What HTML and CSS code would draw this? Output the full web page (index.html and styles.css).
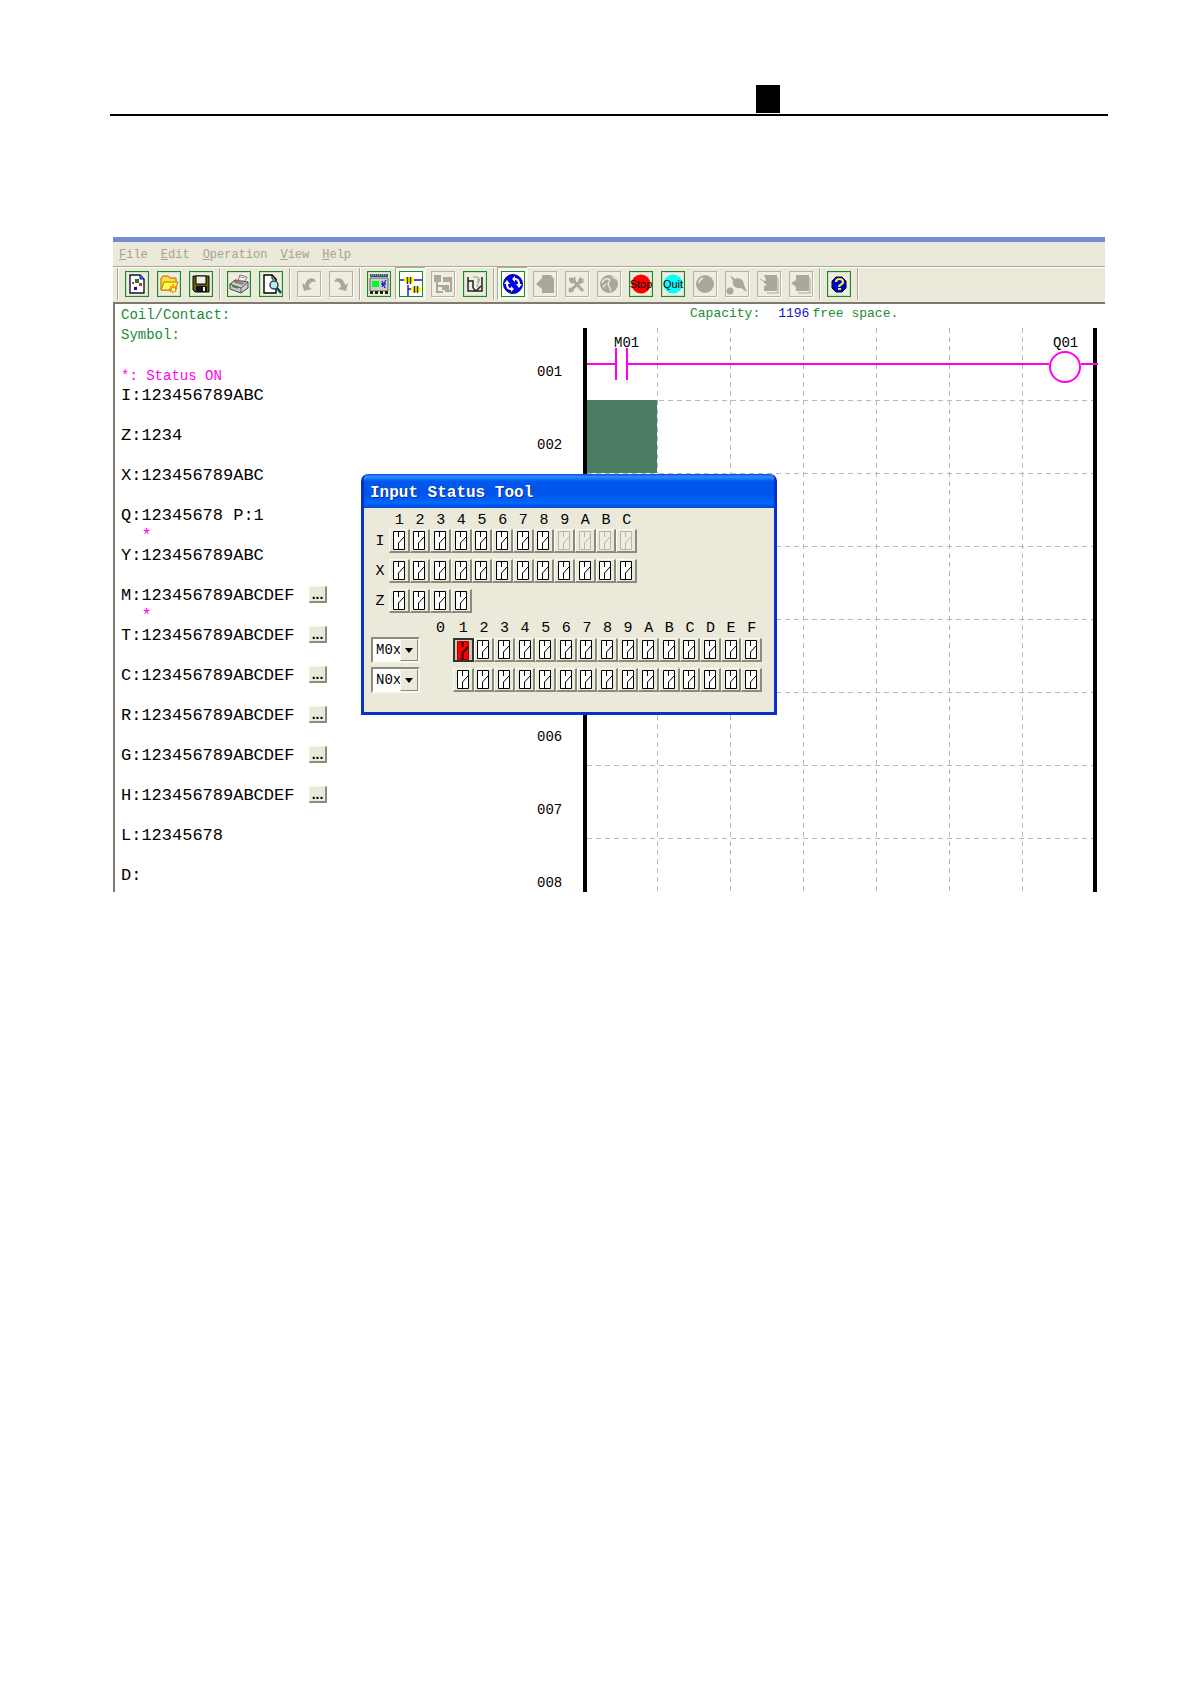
FILE: index.html
```html
<!DOCTYPE html>
<html lang="en">
<head>
<meta charset="utf-8">
<title>Input Status Tool</title>
<link rel="stylesheet" href="styles.css">
</head>
<body>
<header class="page-head"><div class="page-mark"></div></header>
<main class="app">
  <nav class="menu">
    <a href="#file"><u>F</u>ile</a><a href="#edit"><u>E</u>dit</a><a href="#operation"><u>O</u>peration</a><a href="#view"><u>V</u>iew</a><a href="#help"><u>H</u>elp</a>
  </nav>
  <div class="toolbar">
    <span class="sep"></span>
    <div class="group">
      <button class="tool" aria-label="New"><svg viewBox="0 0 22 24"><path d="M4 3h10l4 4v14H4z" fill="#fff" stroke="#113" stroke-width="1.4"/><path d="M14 3v4h4" fill="#66f" stroke="#11a"/><path d="M9 7h4v4H9z" fill="#083"/><path d="M13 11h3v3h-3z" fill="#d22"/><path d="M8 15h3v3H8z" fill="#118"/><path d="M6 10h2v2H6z" fill="#a33"/></svg></button>
      <button class="tool" aria-label="Open"><svg viewBox="0 0 22 24"><path d="M3 18V6l2-2h5l2 2h6v12z" fill="#fd4" stroke="#a60"/><path d="M3 18l3-8h14l-3 8z" fill="#ff5" stroke="#b70"/><path d="M15 12v9M11 17h8M12 14l6 6M18 14l-6 6" stroke="#f80" stroke-width="1.5"/><path d="M14 16h3v3h-3z" fill="#ff8"/></svg></button>
      <button class="tool" aria-label="Save"><svg viewBox="0 0 22 24"><path d="M3 4h16v16H5l-2-2z" fill="#660" stroke="#000"/><path d="M6 4h10v8H6z" fill="#eee" stroke="#000"/><path d="M6 14h11v6H6z" fill="#111"/><path d="M13 15h2v4h-2z" fill="#eee"/></svg></button>
    </div>
    <span class="sep"></span>
    <div class="group">
      <button class="tool" aria-label="Print"><svg viewBox="0 0 22 24"><path d="M9 11l3-8 7 2-4 8z" fill="#fff" stroke="#777"/><path d="M2 12l5-4 13 2v6l-7 5-11-4z" fill="#ccc" stroke="#444"/><path d="M2 12l11 4 7-6M13 16v5" fill="none" stroke="#555"/><path d="M5 10l9 3 3-2-8-3z" fill="#888"/><path d="M7 8l2 3" stroke="#d33" stroke-width="1.5"/><path d="M4 14l6 2" stroke="#292" stroke-width="1.5"/><path d="M12 5l5 1M11 8l5 1" stroke="#999"/></svg></button>
      <button class="tool" aria-label="Preview"><svg viewBox="0 0 22 24"><path d="M4 3h8l4 4v14H4z" fill="#fff" stroke="#000" stroke-width="1.4"/><path d="M12 3v4h4" fill="none" stroke="#000"/><circle cx="14" cy="13" r="4" fill="#bee" stroke="#345" stroke-width="1.5"/><path d="M17 16l4 5" stroke="#146" stroke-width="2.5"/></svg></button>
    </div>
    <span class="sep"></span>
    <div class="group">
      <button class="tool off" disabled aria-label="Undo"><svg viewBox="0 0 22 24"><path d="M4 11l2 8 8-2-3-2c0-4 3-6 7-5-1-5-9-6-11 3z" fill="#aca899"/></svg></button>
      <button class="tool off" disabled aria-label="Redo"><svg viewBox="0 0 22 24"><path d="M18 11l-2 8-8-2 3-2c0-4-3-6-7-5 1-5 9-6 11 3z" fill="#aca899"/></svg></button>
    </div>
    <span class="sep"></span>
    <div class="group">
      <button class="tool" aria-label="Simulator"><svg viewBox="0 0 22 24"><path d="M2 2h18v3H2z" fill="#357"/><path d="M3 3h16" stroke="#cde" stroke-dasharray="1 1"/><path d="M2 6h18v13H2z" fill="#ccc" stroke="#665"/><path d="M4 9h7v6H4z" fill="#0f2"/><path d="M13 12h5M14 9l3 7M18 8l-4 7" stroke="#22d" stroke-width="1.3"/><path d="M2 20.500h18" stroke="#220" stroke-width="3" stroke-dasharray="3 2"/></svg></button>
      <button class="tool pressed" aria-label="Ladder"><svg viewBox="0 0 22 24"><path d="M0 8h5M12 8h10M8 13v11M8 17h4" stroke="#11e" stroke-width="1.4"/><path d="M4 8h10M11 17.500h10" stroke="#ff0" stroke-width="5"/><path d="M7.500 5v7M10.500 5v7M14.500 14v7M17.500 14v7" stroke="#331" stroke-width="1.5"/></svg></button>
      <button class="tool off" disabled aria-label="Blocks"><svg viewBox="0 0 22 24"><path d="M2 3h7v7H2zM11 5h9v5h-9zM10 13h7v5h-7z" fill="#aca899"/><path d="M5 10v10h6M5 14h6M19 9v10h-6" fill="none" stroke="#aca899" stroke-width="2"/></svg></button>
      <button class="tool" aria-label="Chart"><svg viewBox="0 0 22 24"><path d="M4 5v14h14V5M4 9h5v7M9 16l3 3 5-5" fill="none" stroke="#222" stroke-width="1.5"/><path d="M9 5h5v6M16 6l-3 9" fill="none" stroke="#999"/></svg></button>
    </div>
    <span class="sep"></span>
    <div class="group">
      <button class="tool pressed" aria-label="Run"><svg viewBox="0 0 22 24"><circle cx="11" cy="12" r="9.500" fill="#00e" stroke="#008"/><path d="M9 17c-3 0-4-2-4-5M13 7c3 0 4 2 4 5" fill="none" stroke="#fff" stroke-width="2"/><path d="M2 12h6L5 8zM14 12h6l-3 4zM13 4v6l-3-3zM9 14v6l3-3z" fill="#fff"/></svg></button>
      <button class="tool off" disabled aria-label="Read"><svg viewBox="0 0 22 24"><path d="M2 12l6-6V3h9l3 4v14H8v-4z" fill="#aca899"/></svg></button>
      <button class="tool off" disabled aria-label="Configure"><svg viewBox="0 0 22 24"><path d="M5 6l12 13M17 7L5 18" stroke="#aca899" stroke-width="3"/><path d="M3 5l3 3 3-4 1 5-4 3-3-3zM15 4v5l4 1-5 2-2-4z" fill="#aca899"/><circle cx="5" cy="18" r="2.500" fill="#aca899"/></svg></button>
      <button class="tool off" disabled aria-label="Monitor"><svg viewBox="0 0 22 24"><circle cx="11" cy="12" r="9" fill="#aca899"/><path d="M4 11c2-5 6-5 8-3l-2 4 3 7M8 12l-3 3M14 5l4 2" fill="none" stroke="#eeecdf" stroke-width="1.3"/></svg></button>
      <button class="tool" aria-label="Stop"><svg viewBox="0 0 22 24"><circle cx="11" cy="12" r="9.500" fill="#f00"/></svg><span class="tag">Stop</span></button>
      <button class="tool" aria-label="Quit"><svg viewBox="0 0 22 24"><circle cx="11" cy="12" r="9.500" fill="#0ff"/></svg><span class="tag">Quit</span></button>
      <button class="tool off" disabled aria-label="Record"><svg viewBox="0 0 22 24"><circle cx="11" cy="12" r="9" fill="#aca899"/><path d="M5 11c0-3 2-4 4-5" fill="none" stroke="#eeecdf" stroke-width="1.5"/></svg></button>
      <button class="tool off" disabled aria-label="Link"><svg viewBox="0 0 22 24"><path d="M4 3l5 4c4-2 9 1 9 6l3 7-6-4c-6 1-9-3-8-7z" fill="#aca899"/><circle cx="4" cy="19" r="3.500" fill="#aca899"/></svg></button>
      <button class="tool off" disabled aria-label="Upload"><svg viewBox="0 0 22 24"><path d="M6 3h13v16H6v-5l3-1-4-3 3-2z" fill="#aca899"/><path d="M2 7l5 3M9 21h11V6" fill="none" stroke="#aca899"/></svg></button>
      <button class="tool off" disabled aria-label="Download"><svg viewBox="0 0 22 24"><path d="M6 3h13v16H6v-4l-5-4 5-3z" fill="#aca899"/><path d="M8 21h12V6" fill="none" stroke="#aca899"/></svg></button>
    </div>
    <span class="sep"></span>
    <div class="group">
      <button class="tool" aria-label="Help"><svg viewBox="0 0 22 24"><path d="M8 5h6l4 4v7l-4 4H8l-4-4V9z" fill="#00c" stroke="#003"/><path d="M8 10c0-4 7-4 7 0 0 3-4 2-4 5" fill="none" stroke="#ee4" stroke-width="2.200"/><path d="M10 16h3v2h-3z" fill="#ee4"/></svg></button>
    </div>
    <span class="sep"></span>
  </div>
  <div class="work">
    <section class="status">
      <p class="info">Coil/Contact:</p>
      <p class="info">Symbol:</p>
      <p class="legend">*: Status ON</p>
      <div class="bits"><p>I:123456789ABC</p></div>
      <div class="bits"><p>Z:1234</p></div>
      <div class="bits"><p>X:123456789ABC</p></div>
      <div class="bits"><p>Q:12345678 P:1</p><p class="on">  *</p></div>
      <div class="bits"><p>Y:123456789ABC</p></div>
      <div class="bits"><p>M:123456789ABCDEF</p><button class="more">...</button><p class="on">  *</p></div>
      <div class="bits"><p>T:123456789ABCDEF</p><button class="more">...</button></div>
      <div class="bits"><p>C:123456789ABCDEF</p><button class="more">...</button></div>
      <div class="bits"><p>R:123456789ABCDEF</p><button class="more">...</button></div>
      <div class="bits"><p>G:123456789ABCDEF</p><button class="more">...</button></div>
      <div class="bits"><p>H:123456789ABCDEF</p><button class="more">...</button></div>
      <div class="bits"><p>L:12345678</p></div>
      <div class="bits last"><p>D:</p></div>
    </section>
    <div class="rungs">
      <span class="r1">001</span><span class="r2">002</span><span class="r6">006</span><span class="r7">007</span><span class="r8">008</span>
    </div>
    <section class="ladder">
      <div class="capacity"><span>Capacity:</span><b>1196</b><span>free space.</span></div>
      <svg class="diagram" width="522" height="564" viewBox="0 0 522 564">
        <g stroke="#b8b8b8" stroke-dasharray="5 4">
          <path d="M74.500 0v564M147.500 0v564M220.500 0v564M293.500 0v564M366.500 0v564M439.500 0v564"/>
          <path d="M4 72.500h506M4 145.500h506M4 218.500h506M4 291.500h506M4 364.500h506M4 437.500h506M4 510.500h506"/>
        </g>
        <path d="M4 72h70v73H4z" fill="#4b7d62"/>
        <path d="M0 0h4v564H0zM510 0h4v564h-4z"/>
        <g fill="none" stroke="#f0e" stroke-width="2">
          <path d="M4 36h29M44 36h422M498 36h17"/>
          <path d="M33 20v32M44 20v32"/>
          <circle cx="482" cy="39" r="15"/>
        </g>
        <text x="31" y="19">M01</text><text x="470" y="19">Q01</text>
      </svg>
    </section>
  </div>

  <section class="dialog" role="dialog" aria-labelledby="dlg-title">
    <h1 id="dlg-title">Input Status Tool</h1>
    <div class="pane">
      <div class="line nums"><span class="name"></span><div class="cells c12" data-labels="123456789ABC"></div></div>
      <div class="line"><span class="name">I</span><div class="cells c12" data-name="I" data-keys="123456789ABC" data-off="9ABC"></div></div>
      <div class="line"><span class="name">X</span><div class="cells c12" data-name="X" data-keys="123456789ABC"></div></div>
      <div class="line"><span class="name">Z</span><div class="cells c12" data-name="Z" data-keys="1234"></div></div>
      <div class="line nums second"><span class="zero">0</span><div class="cells c15" data-labels="123456789ABCDEF"></div></div>
      <div class="line"><label class="combo"><select aria-label="M range"><option>M0x</option></select><i></i></label><div class="cells c15" data-name="M" data-keys="123456789ABCDEF" data-on="1"></div></div>
      <div class="line"><label class="combo"><select aria-label="N range"><option>N0x</option></select><i></i></label><div class="cells c15" data-name="N" data-keys="123456789ABCDEF"></div></div>
    </div>
  </section>
</main>
<script src="script.js"></script>
</body>
</html>
```
FILE: styles.css
```css
* { box-sizing: border-box; }
body { margin: 0; padding: 85px 83px 0 110px; background: #fff; color: #000; font-family: "Liberation Mono", "Courier New", monospace; font-size: 14px; }
p, h1 { margin: 0; }
button { padding: 0; font: inherit; color: inherit; border-radius: 0; }

.page-head { border-bottom: 2px solid #000; padding-bottom: 1px; }
.page-mark { width: 24px; height: 28px; margin: 0 328px 0 auto; background: #000; }

.app { position: relative; margin: 121px 3px 0; border-top: 5px solid #748bd6; }

.menu { display: flex; gap: 13px; height: 24px; padding: 0 6px; background: #ebe9d9; font-size: 12px; line-height: 26px; }
.menu a { color: #a5a293; text-decoration: none; }

.toolbar { display: flex; align-items: center; height: 38px; padding: 0 0 2px 4px; background: #ece9da; border-top: 1px solid #aca899; border-bottom: 2px solid #7d7b70; box-shadow: inset 0 1px #fff; }
.group { display: flex; gap: 8px; }
.sep { width: 2px; height: 32px; margin: 0 6px; background: #fff; border-left: 1px solid #aca899; }
.sep:first-child { margin-left: 0; }
.tool { position: relative; width: 24px; height: 26px; background: #efeddf; border: 1px solid #178a25; box-shadow: inset 0 0 0 1px #cfe0c0; }
.tool svg { display: block; width: 22px; height: 24px; }
.tool.off { border-color: #b5b2a4; box-shadow: 1px 1px #fff; }
.tool.pressed { background: #fff; box-shadow: 0 0 0 3px #f7f6f0, -1px -1px 0 3px #aca899; }
.tag { position: absolute; inset: 0 -4px; font-family: "Liberation Sans", Arial, sans-serif; font-size: 11px; line-height: 24px; text-align: center; }

.work { display: grid; grid-template-columns: 1fr 46px 522px; border-left: 2px solid #7d7b70; }
.status { padding: 1px 0 5px 6px; line-height: 20px; }
.status p { white-space: pre; }
.info { color: #218a35; }
.status .legend { margin-top: 21px; color: #f0e; }
.bits { display: grid; grid-template-columns: 188px 18px; grid-template-rows: 20px 20px; font-size: 17px; }
.bits.last { grid-template-rows: 20px; }
.on { grid-column: 1; grid-row: 2; color: #f0e; }
.more { width: 18px; height: 17px; background: #ebe9d9; border: solid; border-width: 1px 2px 2px 1px; border-color: #f4f3ea #8c8a7c #8c8a7c #f4f3ea; font-family: "Liberation Sans", Arial, sans-serif; font-size: 14px; font-weight: bold; line-height: 12px; }

.rungs { display: grid; grid-template-rows: repeat(8, 73px); padding-top: 32px; height: 588px; line-height: 73px; }
.r1 { grid-row: 1; }
.r2 { grid-row: 2; }
.r6 { grid-row: 6; }
.r7 { grid-row: 7; }
.r8 { grid-row: 8; }

.capacity { display: flex; height: 24px; padding-left: 107px; line-height: 20px; color: #218a35; font-size: 13px; }
.capacity b { margin: 0 3px 0 18px; color: #11c; font-weight: normal; }
.diagram { display: block; font-size: 14px; }

.dialog { position: absolute; left: 248px; top: 232px; width: 416px; height: 241px; border: solid #0831d0; border-width: 0 3px 3px; border-radius: 7px 7px 0 0; background: #ebe9d9; overflow: hidden; }
.dialog h1 { height: 34px; margin: 0 -3px; padding-left: 9px; background: linear-gradient(#0a4fd8, #2f8cff 8%, #0058ee 22%, #0054e8 60%, #0068ff 85%, #0048d0); color: #fff; font-size: 16px; line-height: 38px; text-shadow: 1px 1px #0a2a90; }
.pane { padding: 5px 0 0 7px; }
.line { display: flex; align-items: center; height: 24px; margin-bottom: 6px; }
.line.nums { height: 16px; margin-bottom: 0; font-size: 15px; line-height: 16px; }
.line.nums.second { height: 19px; }
.name { width: 18px; text-align: center; font-size: 15px; }
.cells { display: grid; flex: none; }
.c12 { grid-template-columns: repeat(12, 1fr); width: 248px; }
.c15 { grid-template-columns: repeat(15, 1fr); width: 309px; margin-left: auto; margin-right: 12px; }
.cells span { text-align: center; }
.zero { flex: none; width: 74px; text-align: right; }
.toggle { display: grid; place-items: center; height: 24px; background: #ebe9d9; border: solid; border-width: 1px 2px 2px 1px; border-color: #fbfaf4 #8c8a7c #8c8a7c #fbfaf4; color: #000; }
.toggle svg { width: 12px; height: 19px; fill: #fff; stroke: currentColor; }
.toggle:disabled { color: #b9b6a6; }
.toggle:disabled svg { fill: #efeddf; }
.toggle.active { background: #c9c7b8; border: 2px solid #333; }
.toggle.active svg { fill: #f00; stroke: #a00; }
.toggle.active .lever { stroke: #200; stroke-width: 2; }

.combo { position: relative; flex: none; width: 49px; height: 26px; }
.combo select { appearance: none; width: 49px; height: 26px; padding: 0 0 0 3px; border: 2px solid; border-color: #8c8a7c #f8f7f0 #f8f7f0 #8c8a7c; border-radius: 0; background: #fff; color: #000; font: inherit; }
.combo i { position: absolute; right: 2px; top: 2px; width: 18px; height: 22px; background: #ebe9d9; border: 1px solid; border-color: #f8f7f0 #8c8a7c #8c8a7c #f8f7f0; pointer-events: none; }
.combo i::after { content: ""; position: absolute; left: 4px; top: 8px; border: 4px solid transparent; border-top: 5px solid #000; border-bottom: 0; }
```
FILE: script.js
```js
// Fill each dialog line with its column labels or its contact buttons.
const contact = '<svg viewBox="0 0 12 19"><path d="M.500 .500h11v18H.500z"/>' +
  '<path class="lever" fill="none" d="M5.500 1v5M11 6L5.500 12v6.500"/></svg>';

document.querySelectorAll('.cells').forEach((row) => {
  const { labels, keys, name, off = '', on = '' } = row.dataset;
  if (labels) {
    for (const ch of labels) {
      const span = document.createElement('span');
      span.textContent = ch;
      row.append(span);
    }
    return;
  }
  for (const ch of keys) {
    const button = document.createElement('button');
    button.className = on.includes(ch) ? 'toggle active' : 'toggle';
    button.disabled = off.includes(ch);
    button.setAttribute('aria-label', name + ch);
    button.innerHTML = contact;
    row.append(button);
  }
});
```
